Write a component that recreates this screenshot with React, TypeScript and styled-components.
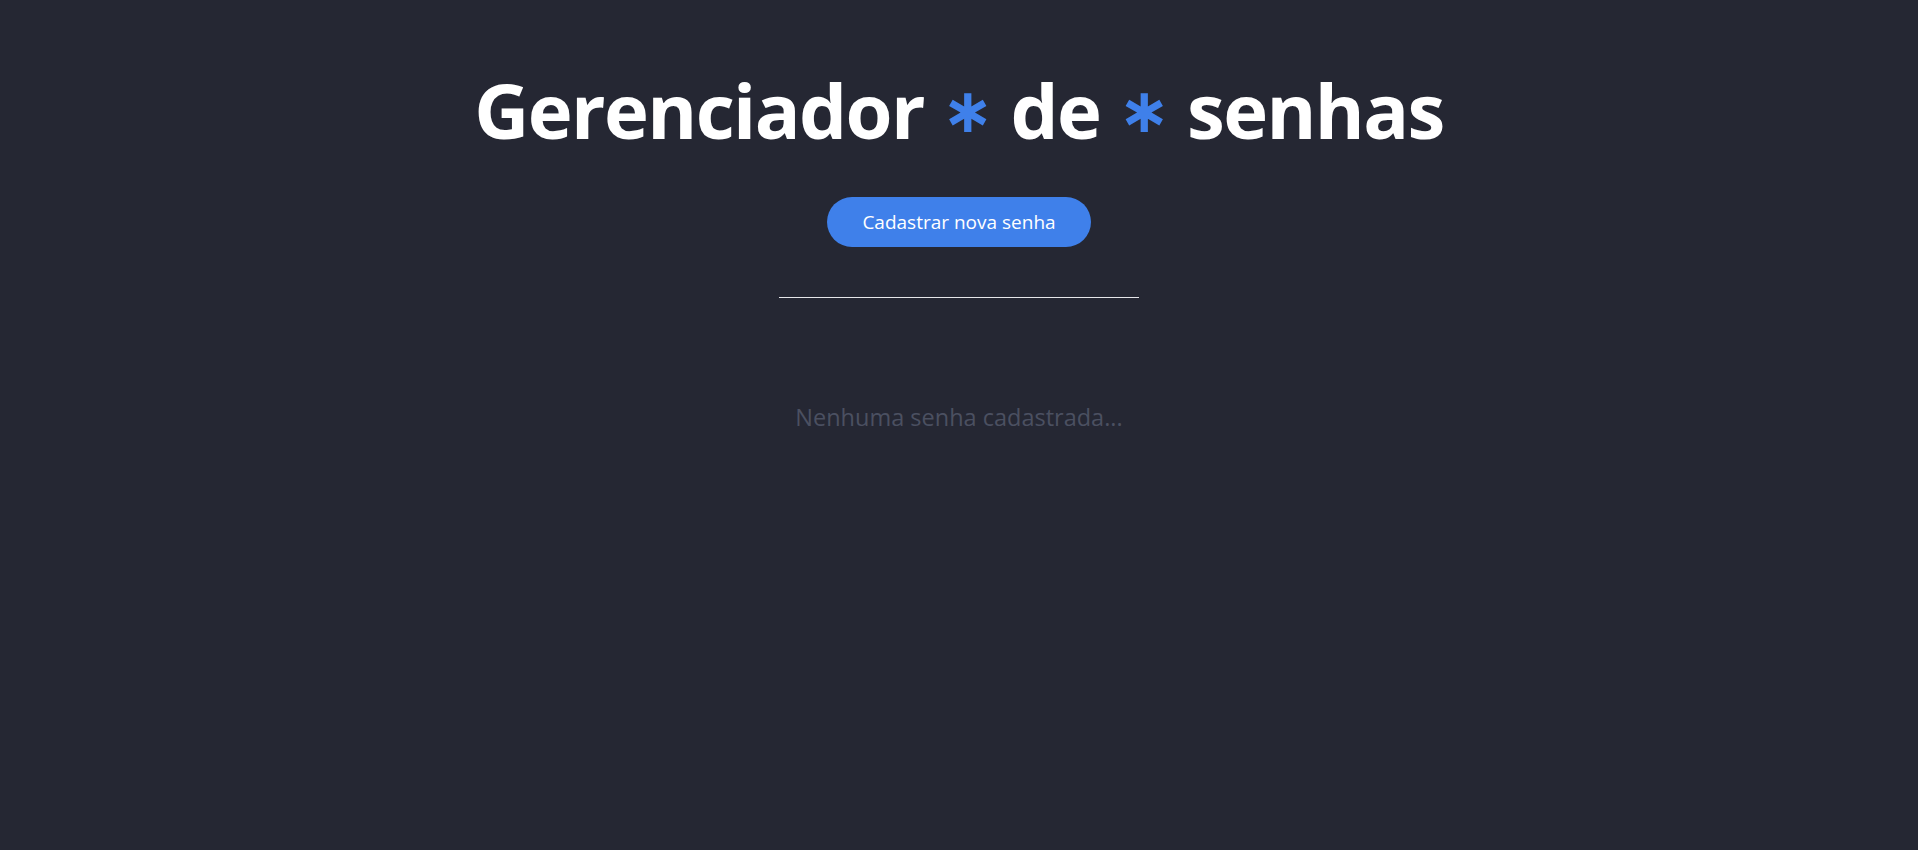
import styled, { createGlobalStyle } from 'styled-components';

const GlobalStyle = createGlobalStyle`
  body {
    margin: 0;
    background-color: #252733;
    font-family: "Open Sans", "Noto Sans", sans-serif;
  }
`

const Page = styled.main`
  display: flex;
  flex-direction: column;
  align-items: center;
  min-height: 850px;
  padding-top: 62px;
  box-sizing: border-box;
  color: #ffffff;
`

const Title = styled.h1`
  margin: 0;
  font-size: 76px;
  font-weight: 700;
  line-height: 96px;
  letter-spacing: -1.6px;
`

const Star = styled.span`
  color: #3f80ea;
  font-family: "DejaVu Sans", sans-serif;
  font-size: 62px;
  font-weight: 700;
  line-height: 1;
  vertical-align: 7px;
`

const NewButton = styled.button`
  width: 264px;
  height: 50px;
  margin-top: 39px;
  
  border: none;
  border-radius: 25px;
  background-color: #3f80ea;
  color: #ffffff;
  font-family: inherit;
  font-size: 19px;
  cursor: pointer;
`

const Divider = styled.hr`
  width: 360px;
  margin: 50px 0 0;
  border: none;
  border-top: 1px solid #e6e6ea;
`

const EmptyText = styled.p`
  margin: 103px 0 0;
  font-size: 23.5px;
  color: #4b5061;
`

export default function App() {
  return (
    <>
      <GlobalStyle />
      <Page>
        <Title>
          Gerenciador <Star>∗</Star> de <Star>∗</Star> senhas
        </Title>
        <NewButton>Cadastrar nova senha</NewButton>
        <Divider />
        <EmptyText>Nenhuma senha cadastrada...</EmptyText>
      </Page>
    </>
  )
}
